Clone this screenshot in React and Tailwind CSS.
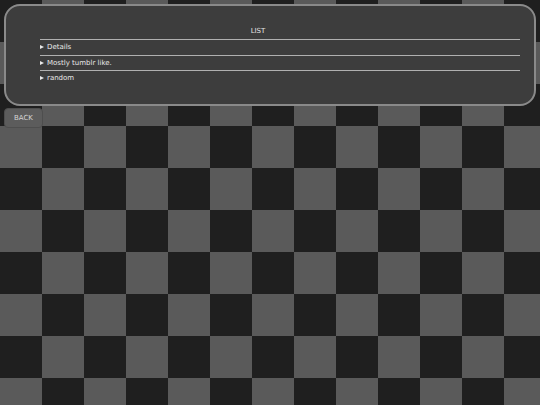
export default function App() {
  const items = ["Details", "Mostly tumblr like.", "random"];

  return (
    <div className="min-h-[405px] w-full p-[4px] font-['DejaVu_Sans',sans-serif] bg-[repeating-conic-gradient(#5a5a5a_0_25%,#1f1f1f_0_50%)] bg-[length:84px_84px]">
      {/* List panel */}
      <div className="h-[102px] rounded-[16px] border-2 border-[#8a8a8a] bg-[#3d3d3d] pt-[20px] pl-[34px] pr-[14px]">
        <div className="mr-[44px] pb-[3px] pt-[1px] text-center text-[7px] leading-[9px] text-[#e4e4e4]">
          LIST
        </div>
        {items.map((item) => (
          <div
            key={item}
            className="flex h-[15.5px] items-center gap-[3px] border-t border-[#b0b0b0] text-[7px] leading-[10px] text-[#e8e8e8]"
          >
            <span className="h-0 w-0 border-y-[2.5px] border-l-[4px] border-y-transparent border-l-[#e8e8e8]" />
            <span>{item}</span>
          </div>
        ))}
      </div>

      {/* Back button */}
      <button className="mt-[2px] flex h-[20px] w-[39px] items-center justify-center rounded-[4px] border border-[#4e4e4e] bg-[#5c5c5c] text-[7px] text-[#d4d4d4]">
        BACK
      </button>
    </div>
  );
}
